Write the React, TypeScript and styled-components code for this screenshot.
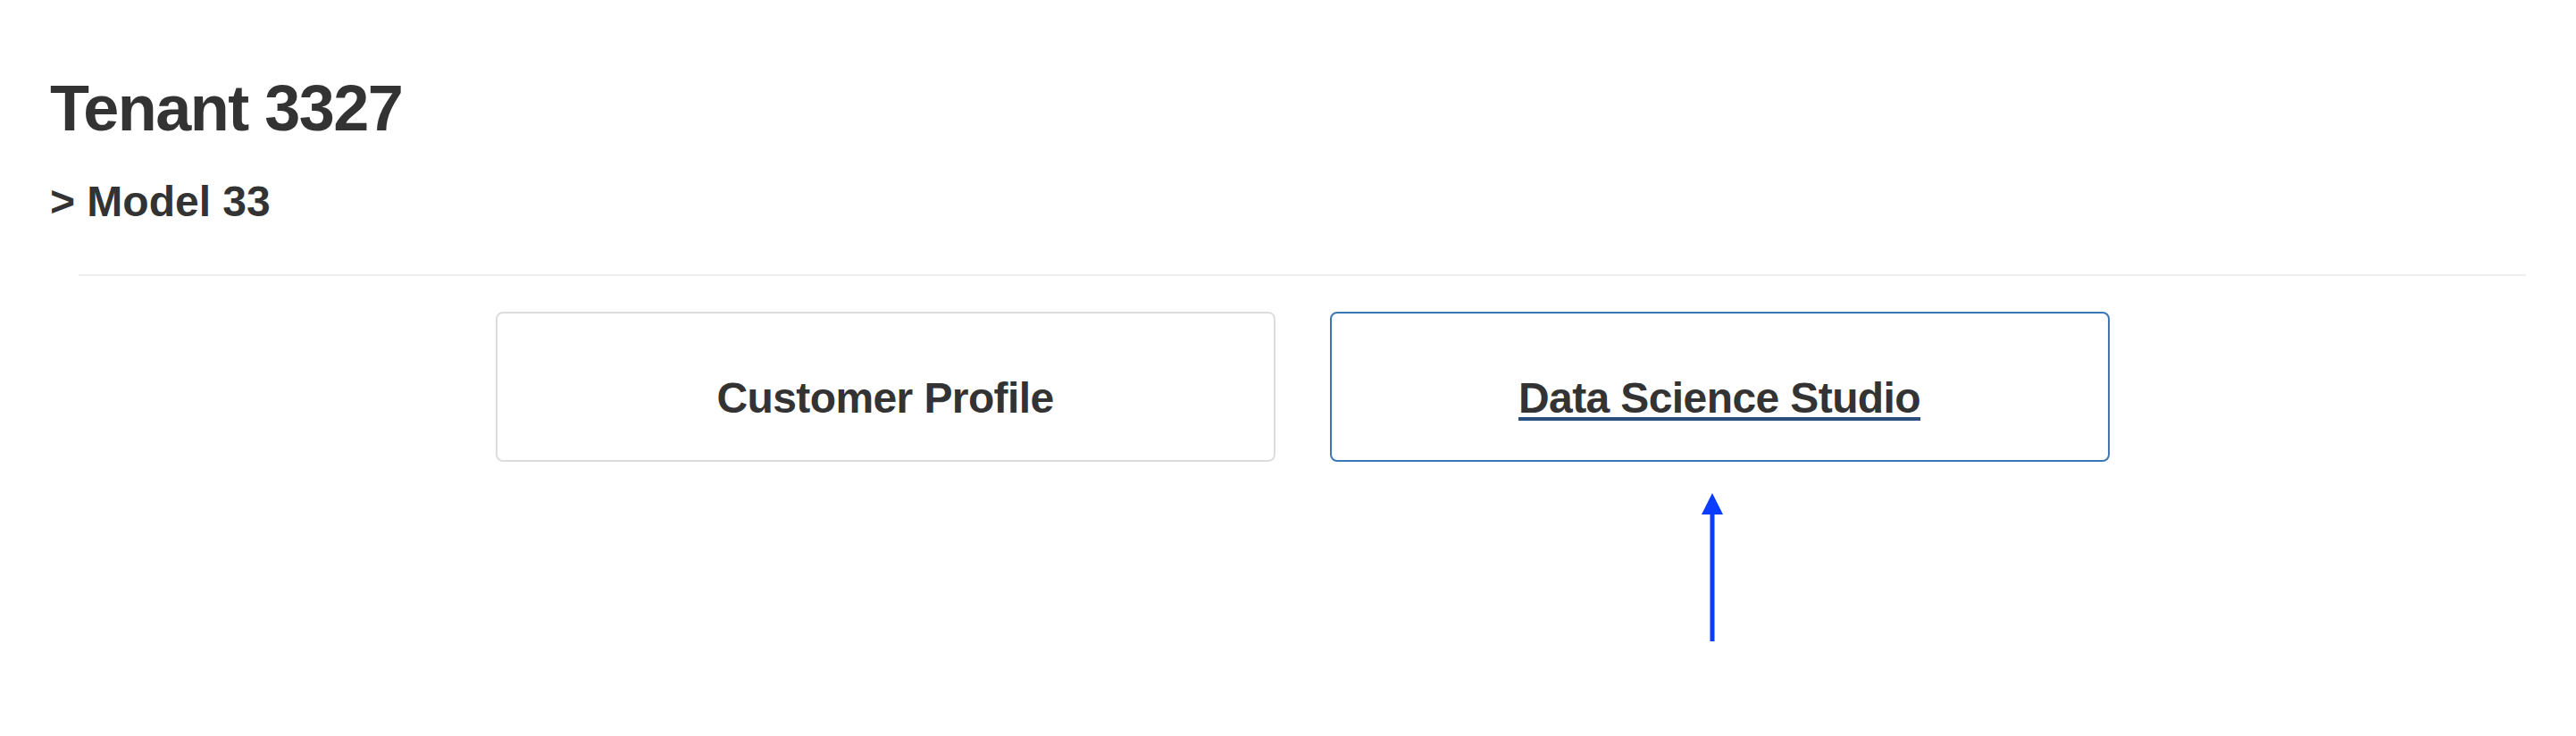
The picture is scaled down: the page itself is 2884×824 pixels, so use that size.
import styled, { createGlobalStyle } from "styled-components";

const GlobalStyle = createGlobalStyle`
  body {
    margin: 0;
    background: #ffffff;
    font-family: "Liberation Sans", Arial, sans-serif;
    color: #333333;
  }
`;

type Tile = {
  label: string;
  active?: boolean;
};

const tiles: Tile[] = [
  { label: "Customer Profile" },
  { label: "Data Science Studio", active: true },
];

function UpArrow() {
  return (
    <Pointer width="24" height="166" viewBox="0 0 24 166" aria-hidden="true">
      <path d="M12 0 L0 24 L24 24 Z" fill="#0a3dff" />
      <path d="M9.5 22 H14.5 V166 H9.5 Z" fill="#0a3dff" />
    </Pointer>
  );
}

function App() {
  return (
    <>
      <GlobalStyle />
      <Page>
        <Title>Tenant 3327</Title>
        <Crumb>&gt; Model 33</Crumb>
        <Section>
          <Divider />
          <CardRow>
            {tiles.map((tile) => (
              <CardColumn key={tile.label}>
                <Card $active={tile.active}>
                  <CardLabel $active={tile.active}>{tile.label}</CardLabel>
                </Card>
                {tile.active && <UpArrow />}
              </CardColumn>
            ))}
          </CardRow>
        </Section>
      </Page>
    </>
  );
}

export default App;

const Page = styled.div`
  padding: 82px 56px 0 56px;
`;

const Title = styled.h1`
  margin: 0;
  font-size: 72px;
  line-height: 1.1;
  font-weight: 700;
  letter-spacing: -1.5px;
  color: #333333;
`;

const Crumb = styled.h3`
  margin: 39px 0 0 0;
  font-size: 48px;
  line-height: 1.1;
  font-weight: 700;
  color: #333333;
`;

const Section = styled.div`
  margin-left: 32px;
`;

const Divider = styled.hr`
  margin: 54px 0 0 0;
  border: 0;
  border-top: 2px solid #eeeeee;
  height: 0;
`;

const CardRow = styled.div`
  display: flex;
  justify-content: center;
  align-items: flex-start;
  gap: 61px;
  margin-top: 40px;
`;

const CardColumn = styled.div`
  display: flex;
  flex-direction: column;
  align-items: center;
`;

const Card = styled.div<{ $active?: boolean }>`
  box-sizing: border-box;
  width: 873px;
  height: 168px;
  padding-top: 27px;
  border: 2px solid ${(p) => (p.$active ? "#3b78b5" : "#dddddd")};
  border-radius: 8px;
  background: #ffffff;
  display: flex;
  align-items: center;
  justify-content: center;
`;

const CardLabel = styled.span<{ $active?: boolean }>`
  font-size: 48px;
  line-height: 1.1;
  font-weight: 700;
  letter-spacing: -0.6px;
  color: #333333;
  text-decoration: ${(p) => (p.$active ? "underline" : "none")};
  text-decoration-color: #2b4f7c;
  text-decoration-thickness: 4px;
  text-underline-offset: 5px;
`;

const Pointer = styled.svg`
  display: block;
  flex: none;
  margin-top: 35px;
  margin-right: 16px;
`;
